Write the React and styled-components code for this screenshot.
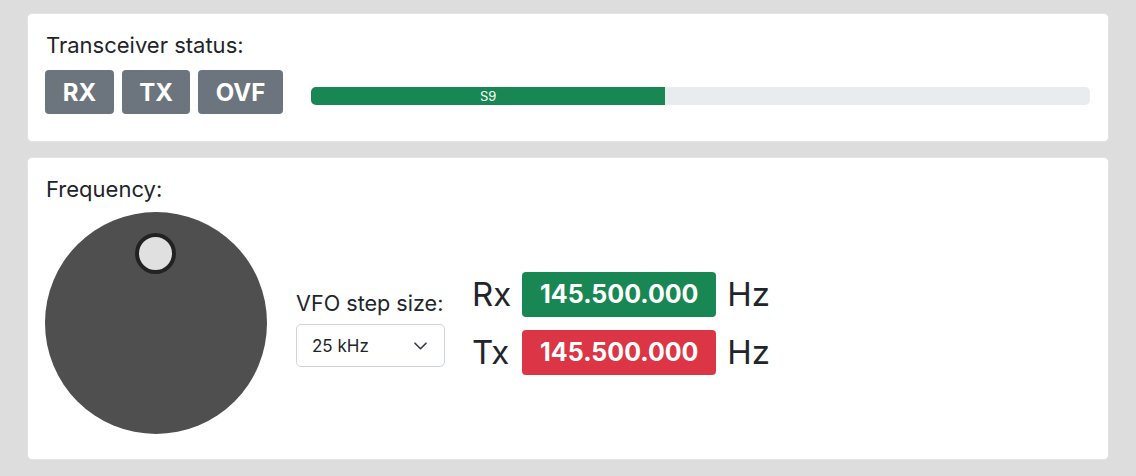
import React from 'react'
import styled, { createGlobalStyle } from 'styled-components'

const GlobalStyle = createGlobalStyle`
  body {
    margin: 0;
    background: #dddddd;
    font-family: Inter, "Noto Sans", sans-serif;
    color: #212529;
  }
`

const Page = styled.div`
  display: flex;
  flex-direction: column;
  gap: 15px;
  padding: 13px 27px 16px 27px;
`

const Card = styled.div`
  background: #ffffff;
  border: 1px solid #e4e4e4;
  border-radius: 5px;
  padding: 18px 17px 25px 17px;
`

const Title = styled.div`
  font-size: 22px;
  line-height: 26px;
  margin-left: 1px;
  margin-bottom: ${p => p.$gap}px;
`

const StatusRow = styled.div`
  display: flex;
  align-items: center;
  gap: 8px;
  margin-bottom: 2px;
`

const StatusButton = styled.div`
  background: #6c757d;
  color: #fff;
  font-weight: 700;
  font-size: 24px;
  height: 44px;
  width: ${p => p.$w}px;
  display: flex;
  align-items: center;
  justify-content: center;
  border-radius: 4px;
`

const Meter = styled.div`
  flex: 1;
  margin: 8px 1px 0 20px;
  height: 18px;
  background: #e9ecef;
  border-radius: 5px;
  overflow: hidden;
  display: flex;
`

const MeterFill = styled.div`
  background: #198754;
  color: #fff;
  font-size: 13px;
  display: flex;
  align-items: center;
  justify-content: center;
`

const FreqRow = styled.div`
  display: flex;
  align-items: center;
  gap: 29px;
`

const Knob = styled.div`
  position: relative;
  width: 222px;
  height: 222px;
  border-radius: 50%;
  background: #4f4f4f;
  flex-shrink: 0;
`

const KnobDot = styled.div`
  position: absolute;
  left: 90px;
  top: 21px;
  width: 33px;
  height: 33px;
  border-radius: 50%;
  background: #e0e0e0;
  border: 4px solid #222;
`

const StepColumn = styled.div`
  display: flex;
  flex-direction: column;
  gap: 8px;
  margin-top: 11px;
`

const StepLabel = styled.div`
  font-size: 21.6px;
  line-height: 26px;
`

const Select = styled.div`
  width: 149px;
  height: 43px;
  box-sizing: border-box;
  border: 1px solid #ced4da;
  border-radius: 5px;
  display: flex;
  align-items: center;
  justify-content: space-between;
  padding: 0 17px 0 15px;
  font-size: 17px;
`

const FreqTable = styled.div`
  display: grid;
  grid-template-columns: auto auto auto;
  align-items: center;
  column-gap: 11px;
  row-gap: 13px;
  margin-left: -2px;
`

const FreqLabel = styled.div`
  font-size: 33px;
  line-height: 38px;
`

const FreqBadge = styled.div`
  background: ${p => p.$color};
  color: #fff;
  font-weight: 700;
  font-size: 25px;
  height: 45px;
  width: 194px;
  border-radius: 4px;
  display: flex;
  align-items: center;
  justify-content: center;
`

function Chevron() {
  return (
    <svg width="13" height="8" viewBox="0 0 13 8" fill="none" stroke="#343a40" strokeWidth="1.6" strokeLinecap="round" strokeLinejoin="round">
      <path d="M1 1.2l5.5 5.5 5.5-5.5" />
    </svg>
  )
}

export default function App() {
  const signal = 45.5
  return (
    <Page>
      <GlobalStyle />
      <Card>
        <Title $gap={12}>Transceiver status:</Title>
        <StatusRow>
          <StatusButton $w={69}>RX</StatusButton>
          <StatusButton $w={68}>TX</StatusButton>
          <StatusButton $w={85}>OVF</StatusButton>
          <Meter>
            <MeterFill style={{ width: signal + '%' }}>S9</MeterFill>
          </Meter>
        </StatusRow>
      </Card>
      <Card>
        <Title $gap={10}>Frequency:</Title>
        <FreqRow>
          <Knob><KnobDot /></Knob>
          <StepColumn>
            <StepLabel>VFO step size:</StepLabel>
            <Select>25 kHz<Chevron /></Select>
          </StepColumn>
          <FreqTable>
            <FreqLabel>Rx</FreqLabel>
            <FreqBadge $color="#198754">145.500.000</FreqBadge>
            <FreqLabel>Hz</FreqLabel>
            <FreqLabel>Tx</FreqLabel>
            <FreqBadge $color="#dc3545">145.500.000</FreqBadge>
            <FreqLabel>Hz</FreqLabel>
          </FreqTable>
        </FreqRow>
      </Card>
    </Page>
  )
}
